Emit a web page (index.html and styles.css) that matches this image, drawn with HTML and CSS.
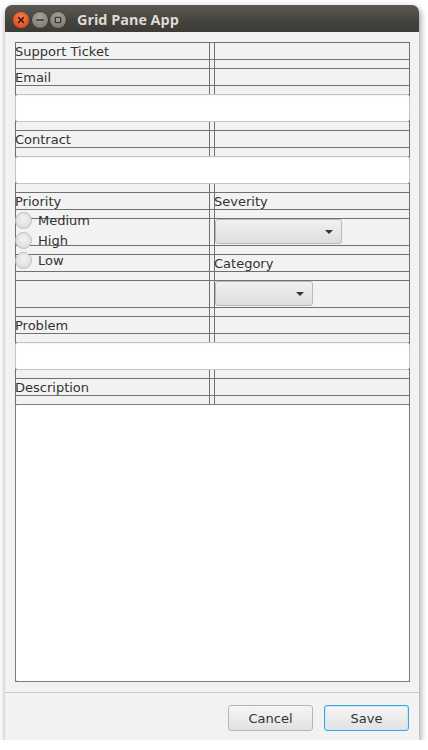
FILE: index.html
```html
<!DOCTYPE html>
<html>
<head>
<meta charset="utf-8">
<title>Grid Pane App</title>
<link rel="stylesheet" href="styles.css">
</head>
<body>
<div class="window">
  <div class="titlebar">
    <div class="controls">
      <span class="wbtn close">
        <svg width="16" height="16" viewBox="0 0 16 16"><path d="M5.6 5.6 L10.4 10.4 M10.4 5.6 L5.6 10.4" stroke="#4a1606" stroke-width="1.5" stroke-linecap="round"/></svg>
      </span>
      <span class="wbtn gray">
        <svg width="16" height="16" viewBox="0 0 16 16"><path d="M4.8 8 H11.2" stroke="#3a3934" stroke-width="1.6" stroke-linecap="round"/></svg>
      </span>
      <span class="wbtn gray">
        <svg width="16" height="16" viewBox="0 0 16 16"><rect x="5.3" y="5.3" width="5.4" height="5.4" rx="0.8" fill="none" stroke="#3a3934" stroke-width="1.3"/></svg>
      </span>
    </div>
    <div class="title">Grid Pane App</div>
  </div>

  <div class="content">
    <div class="grid">
      <div class="vline ca"></div>
      <div class="vline cb"></div>

      <div class="hline r1"></div>
      <div class="hline r2"></div>
      <div class="hline r3"></div>
      <div class="hline r4"></div>
      <div class="hline r5"></div>
      <div class="hline r6"></div>
      <div class="hline r7"></div>
      <div class="hline r8"></div>
      <div class="hline r9"></div>
      <div class="hline r10"></div>
      <div class="hline r11"></div>
      <div class="hline r12"></div>
      <div class="hline r13"></div>

      <span class="lbl r1 ca">Support Ticket</span>
      <span class="lbl r2 ca">Email</span>
      <div class="field r3"></div>
      <span class="lbl r4 ca">Contract</span>
      <div class="field r5"></div>
      <span class="lbl r6 ca">Priority</span>
      <span class="lbl r6 cb">Severity</span>

      <div class="radios r7 ca">
        <div class="radio"><span class="dot"></span><span class="rtext">Medium</span></div>
        <div class="radio"><span class="dot"></span><span class="rtext">High</span></div>
        <div class="radio"><span class="dot"></span><span class="rtext">Low</span></div>
      </div>

      <div class="combo sev r7 cb"><span class="arrow"></span></div>
      <span class="lbl r8 cb">Category</span>
      <div class="combo cat r9 cb"><span class="arrow"></span></div>

      <span class="lbl r10 ca">Problem</span>
      <div class="field r11"></div>
      <span class="lbl r12 ca">Description</span>
      <div class="area r13"></div>
    </div>
  </div>

  <div class="buttonbar">
    <button class="btn">Cancel</button>
    <button class="btn default">Save</button>
  </div>
</div>
</body>
</html>
```

FILE: styles.css
```css
html, body {
  margin: 0;
  padding: 0;
  background: #ffffff;
}

body {
  font-family: "DejaVu Sans", "Liberation Sans", sans-serif;
  font-size: 13px;
  color: #333333;
}

.window {
  margin: 5px 0 0 5px;
  width: 414px;
  height: 735px;
  display: flex;
  flex-direction: column;
  border-radius: 7px 7px 0 0;
  box-shadow: 1px 3px 7px rgba(0, 0, 0, 0.45);
  background: #f2f2f2;
}

.titlebar {
  height: 27px;
  flex: none;
  display: flex;
  align-items: center;
  padding-left: 8px;
  border-radius: 7px 7px 0 0;
  background: linear-gradient(#5c5951, #45433e 60%, #3c3b37);
}

.controls {
  display: flex;
  gap: 2.5px;
  margin-top: 3px;
}

.wbtn {
  width: 16px;
  height: 16px;
  border-radius: 50%;
  display: flex;
  box-sizing: border-box;
}

.wbtn svg {
  display: block;
}

.wbtn.close {
  background: radial-gradient(circle at 50% 35%, #f58457, #e45a2c 55%, #c8431b);
  box-shadow: 0 0 0 0.5px #7d2f15;
}

.wbtn.gray {
  background: radial-gradient(circle at 50% 35%, #a8a59d, #8a877f 55%, #6f6c66);
  box-shadow: 0 0 0 0.5px #2f2e2b;
}

.title {
  margin-left: 11px;
  margin-top: 1px;
  font-family: "Open Sans", "DejaVu Sans", sans-serif;
  font-weight: 700;
  font-size: 14.4px;
  color: #dfdbd2;
}

.content {
  flex: 1;
  min-height: 0;
  padding: 10px 9px 10px 10px;
  display: flex;
  flex-direction: column;
}

.grid {
  flex: 1;
  display: grid;
  grid-template-columns: 195px 196px;
  column-gap: 4px;
  row-gap: 8.5px;
  grid-template-rows:
    17.5px 17.5px 27.5px 17.5px 27.5px 17.5px 27.5px
    17.5px 27.5px 17.5px 27.5px 17.5px 1fr;
}

.vline {
  grid-row: 1 / -1;
  border-left: 1px solid #707070;
  border-right: 1px solid #707070;
  z-index: 0;
}

.hline {
  grid-column: 1 / -1;
  border-top: 1px solid #707070;
  border-bottom: 1px solid #707070;
  z-index: 0;
}

.ca { grid-column: 1; }
.cb { grid-column: 2; }

.r1 { grid-row: 1; }
.r2 { grid-row: 2; }
.r3 { grid-row: 3; }
.r4 { grid-row: 4; }
.r5 { grid-row: 5; }
.r6 { grid-row: 6; }
.r7 { grid-row: 7; }
.r8 { grid-row: 8; }
.r9 { grid-row: 9; }
.r10 { grid-row: 10; }
.r11 { grid-row: 11; }
.r12 { grid-row: 12; }
.r13 { grid-row: 13; }

.lbl {
  line-height: 17px;
  margin-top: 1px;
  align-self: start;
  white-space: nowrap;
  z-index: 1;
}

.field {
  grid-column: 1 / -1;
  z-index: 1;
  background: #ffffff;
  border: 1px solid #c4c4c4;
  border-radius: 3px;
  box-shadow: inset 0 1px 1px rgba(0, 0, 0, 0.05);
}

.area {
  grid-column: 1 / -1;
  z-index: 1;
  background: #ffffff;
  border: 1px solid #7c7c7c;
  border-radius: 2px;
}

.radios {
  grid-row: 7 / span 2;
  align-self: start;
  margin-top: -6px;
  display: flex;
  flex-direction: column;
  gap: 3px;
  z-index: 1;
}

.radio {
  height: 17px;
  display: flex;
  align-items: center;
  gap: 6px;
}

.dot {
  width: 17px;
  height: 17px;
  box-sizing: border-box;
  border-radius: 50%;
  border: 1px solid #bdbdbd;
  background: radial-gradient(circle at 50% 40%, #f2f2f2, #e2e2e2 60%, #d6d6d6);
  flex: none;
}

.rtext {
  line-height: 17px;
}

.combo {
  z-index: 1;
  align-self: center;
  height: 25px;
  margin-left: 1px;
  box-sizing: border-box;
  border: 1px solid #b9b9b9;
  border-radius: 3px;
  background: linear-gradient(#f1f1f1, #dddddd);
  display: flex;
  justify-content: flex-end;
  align-items: center;
}

.combo.sev { width: 127px; }
.combo.cat { width: 98px; }

.arrow {
  width: 25px;
  display: flex;
  justify-content: center;
}

.arrow::before {
  content: "";
  width: 0;
  height: 0;
  border-left: 4px solid transparent;
  border-right: 4px solid transparent;
  border-top: 4px solid #333333;
}

.buttonbar {
  flex: none;
  height: 48px;
  border-top: 1px solid #cbcbcb;
  display: flex;
  justify-content: flex-end;
  align-items: flex-start;
  gap: 11px;
  padding: 12px 10px 0 0;
  box-sizing: border-box;
}

.btn {
  margin: 0;
  height: 26px;
  padding: 0;
  font-family: "DejaVu Sans", "Liberation Sans", sans-serif;
  font-size: 13px;
  color: #333333;
  border: 1px solid #b6b6b6;
  border-radius: 3px;
  background: linear-gradient(#f5f5f5, #e2e2e2);
  width: 85px;
}

.btn.default {
  border-color: #3fa3de;
  box-shadow: inset 0 0 0 1px #cfe7f5;
}
```
